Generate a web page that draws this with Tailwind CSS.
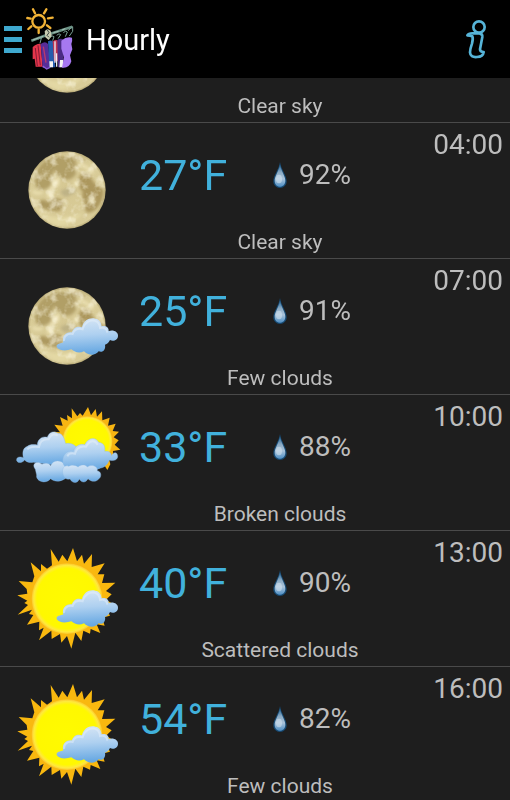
<!DOCTYPE html>
<html lang="en">
<head>
  <meta charset="UTF-8" />
  <meta name="viewport" content="width=device-width, initial-scale=1.0"/>
  <title>Hourly</title>
  <script src="https://cdn.jsdelivr.net/npm/@tailwindcss/browser@4"></script>
</head>
<body class="h-screen overflow-hidden flex flex-col bg-[#1e1e1e] text-[#bdbdbd] font-[Roboto,sans-serif]">

  <!-- Shared weather drawings -->
  <svg class="absolute w-0 h-0" aria-hidden="true">
    <defs>
      <radialGradient id="moonFill" cx="0.5" cy="0.5" r="0.5">
        <stop offset="0" stop-color="#d6c893"/>
        <stop offset="0.94" stop-color="#d9cc98"/>
        <stop offset="1" stop-color="#b3a572"/>
      </radialGradient>
      <radialGradient id="sunFill" cx="0.5" cy="0.5" r="0.5">
        <stop offset="0" stop-color="#fffb00"/>
        <stop offset="0.85" stop-color="#fff800"/>
        <stop offset="0.94" stop-color="#ffe93c"/>
        <stop offset="1" stop-color="#fcc52c"/>
      </radialGradient>
      <linearGradient id="cloudFill" x1="0" y1="0" x2="0.1" y2="1">
        <stop offset="0" stop-color="#d9e7f5"/>
        <stop offset="0.5" stop-color="#aed0f0"/>
        <stop offset="1" stop-color="#67a8e2"/>
      </linearGradient>
      <linearGradient id="dropFill" x1="0" y1="0" x2="0" y2="1">
        <stop offset="0" stop-color="#1c5f92"/>
        <stop offset="0.35" stop-color="#8aa9c2"/>
        <stop offset="0.65" stop-color="#a9c3da"/>
        <stop offset="1" stop-color="#4f8fc4"/>
      </linearGradient>
      <filter id="soft" x="-20%" y="-20%" width="140%" height="140%"><feGaussianBlur stdDeviation="4"/></filter>
      <filter id="craters" x="0" y="0" width="100%" height="100%">
        <feTurbulence type="fractalNoise" baseFrequency="0.035" numOctaves="3" seed="7"/>
        <feColorMatrix values="0 0 0 0 0.95  0 0 0 0 0.91  0 0 0 0 0.73  3.5 0 0 0 -1.6"/>
        <feComposite in2="SourceGraphic" operator="in"/>
      </filter>
      <clipPath id="moonClip"><circle cx="201" cy="201" r="115"/></clipPath>

      <symbol id="moon" viewBox="0 0 390 405">
        <circle cx="201" cy="201" r="116" fill="url(#moonFill)"/>
        <g clip-path="url(#moonClip)">
          <g filter="url(#soft)">
            <path d="M122 124Q150 94 196 100Q240 90 262 116Q240 106 222 112Q242 130 228 152Q214 176 188 168Q168 160 166 140Q150 160 156 182Q138 208 112 196Q92 166 122 124Z" fill="#a8935a" opacity=".8"/>
            <path d="M240 156Q262 142 274 164Q282 184 300 192Q318 198 306 232Q290 268 262 270Q250 258 256 240Q242 226 248 206Q226 192 240 156Z" fill="#a48e54" opacity=".85"/>
            <path d="M118 236Q128 222 144 238Q160 218 186 230Q194 252 176 266Q146 262 130 256Q114 254 118 236Z" fill="#a58f55" opacity=".85"/>
            <path d="M180 206Q196 190 226 198Q232 212 212 214Q196 232 180 206Z" fill="#9b9272" opacity=".4"/>
            <path d="M128 206Q112 216 98 204M148 204Q170 186 178 160M238 122Q262 132 280 150M226 128L232 146" fill="none" stroke="#efe5b8" stroke-width="9" opacity=".8"/>
            <circle cx="166" cy="180" r="11" fill="#f2e8bf"/>
            <circle cx="150" cy="216" r="9" fill="#efe5b8"/>
            <circle cx="230" cy="182" r="8" fill="#efe5b8"/>
            <circle cx="276" cy="232" r="9" fill="#ddcf9a"/>
            <path d="M110 260Q160 300 250 270Q200 325 150 300Z" fill="#e3d8a4"/>
          </g>
          <circle cx="201" cy="201" r="116" filter="url(#craters)" opacity=".55"/>
        </g>
      </symbol>

      <symbol id="cloud" viewBox="0 0 390 405">
        <path d="M170 264C168 254 182 254 190 250C184 232 200 216 216 220C220 204 236 200 246 205C250 184 270 174 286 179C298 180 304 192 305 202C318 198 327 206 326 216C340 211 354 218 354 230C354 243 340 248 330 243C327 250 322 255 315 257C318 272 308 282 296 277C286 291 264 290 252 277C238 284 224 280 214 271C198 276 176 276 170 264Z" fill="url(#cloudFill)"/>
        <path d="M192 246C190 232 202 222 218 225C222 210 236 207 248 211C254 190 270 182 284 185C294 187 299 196 300 207C314 204 321 210 322 221" fill="none" stroke="#e6f0fa" stroke-width="6" opacity=".5"/>
      </symbol>

      <symbol id="sun" viewBox="0 0 390 405">
        <path d="M219 51L231 91L246 71L252 98L276 69L275 108L314 97L293 130L313 130L306 156L346 155L318 180L335 190L318 206L344 222L320 234L330 254L306 260L314 284L290 280L301 306L272 294L270 308L250 299L244 330L226 305L214 353L201 315L184 335L180 309L155 324L154 299L117 328L131 290L117 298L118 272L81 281L100 252L87 249L96 236L53 251L84 222L73 216L82 209L52 193L82 188L80 174L56 150L97 154L103 136L92 94L123 121L123 99L141 113L156 103L152 54L176 92L187 71L202 91Z" fill="#f9b80f"/>
        <circle cx="201" cy="203" r="106" fill="url(#sunFill)"/>
      </symbol>

      <symbol id="brokenClouds" viewBox="0 0 390 405">
        <path d="M264 36L273 61L287 42L291 65L306 49L307 76L329 68L324 92L347 86L338 108L357 110L341 127L356 136L344 149L361 164L339 168L340 190L328 195L331 208L322 225L310 206L220 206L176 130L161 110L180 112L163 89L188 92L180 66L203 77L201 60L216 70L215 40L232 64L240 54L248 62Z" fill="#f7b512"/>
        <circle cx="262" cy="139" r="75" fill="url(#sunFill)"/>
        <g fill="url(#cloudFill)" stroke="#8dbbe6" stroke-opacity=".6" stroke-width="2">
          <path d="M50 197C48 186 60 184 70 188C68 176 66 160 82 154C88 148 102 148 112 150C112 132 128 122 142 127C148 108 164 108 174 115C190 116 192 132 197 146C214 142 228 152 232 162L222 200L180 212L100 202C90 204 80 202 74 195C64 206 54 204 50 197Z"/>
          <path d="M106 223C92 204 114 196 126 208C136 202 148 204 152 212C160 192 184 196 192 206C210 212 210 248 190 254C174 262 160 258 152 251C136 270 106 258 110 240Z"/>
          <path d="M190 208C184 182 200 164 220 170C226 150 242 146 254 149C266 126 288 126 296 142C314 144 316 158 314 169C328 168 334 174 334 182C344 166 354 174 353 186C350 198 336 198 328 195C322 210 312 218 302 219C280 230 220 230 198 220Z"/>
          <path d="M190 240C182 222 194 208 206 214C214 208 228 210 234 216C244 208 256 208 262 216C276 206 294 214 292 228C304 228 306 246 296 252C286 264 270 258 264 251C256 266 244 262 238 252C232 268 216 264 210 252C200 254 194 250 190 240Z"/>
        </g>
        <path d="M82 163C92 153 104 155 117 156C120 138 132 131 146 133C154 116 164 116 173 122M202 184C206 174 214 173 225 176C230 158 244 153 258 155C270 134 284 134 293 149" fill="none" stroke="#e6f0fa" stroke-width="6" opacity=".5"/>
      </symbol>

      <symbol id="drop" viewBox="430 105 40 78">
        <path d="M450 105C454 130 470 144 470 163C470 175 461 183 450 183C439 183 430 175 430 163C430 144 446 130 450 105Z" fill="#174a73"/>
        <path d="M450 112C454 134 466 148 466 161C466 172 459 179 450 179C441 179 434 172 434 161C434 148 446 134 450 112Z" fill="url(#dropFill)"/>
        <ellipse cx="447" cy="156" rx="9" ry="13" fill="#cfdfed" opacity=".6"/>
      </symbol>
    </defs>
  </svg>

  <!-- Header -->
  <header class="relative z-10 shrink-0 h-[78px] bg-black text-white flex items-center justify-between pl-1 pr-6">
    <div class="flex items-center">
      <button type="button" aria-label="Menu" class="flex items-center gap-1">
        <span class="flex flex-col gap-[6px] w-[18px]">
          <span class="h-[5px] bg-[#3fa9cf]"></span>
          <span class="h-[5px] bg-[#3fa9cf]"></span>
          <span class="h-[5px] bg-[#3fa9cf]"></span>
        </span>
        <svg class="w-12 h-[62px]" viewBox="78 24 144 186" aria-hidden="true">
          <g fill="none" stroke="#f2b336" stroke-width="7" stroke-linecap="round">
            <circle cx="116" cy="64" r="19"/>
            <path d="M99 28L105 40M139 28L132 40M82 54L92 56M144 55L158 53M85 87L94 79M141 76L151 84M116 88V99"/>
          </g>
          <path d="M94 122L140 105L217 80" fill="none" stroke="#6b9184" stroke-width="8"/>
          <path d="M98 120L130 109M160 98L176 94M186 90L196 86" fill="none" stroke="#a8c4b8" stroke-width="3"/>
          <path d="M114 118q4-6 10-4l-4 16M150 112q6-8 12-2l-4 12M170 106q8-8 12-2l-8 12M190 98q8-8 12-2l-6 14M204 92l14-12v14l-10 14" fill="none" stroke="#7aa095" stroke-width="3"/>
          <path d="M134 94Q142 82 152 92L155 108L146 120L136 112Z" fill="#c7cbb0"/>
          <path d="M142 90l5 8-6 8 6 6" fill="none" stroke="#38433f" stroke-width="3"/>
          <path d="M98 142Q108 130 122 131L128 200L107 200L104 176L98 178Z" fill="#e5364c"/>
          <path d="M106 144L112 198M114 136L121 196" stroke="#861b35" stroke-width="3"/>
          <path d="M122 132Q136 122 144 132L152 204H128Z" fill="#572d99"/>
          <path d="M130 140L138 188" stroke="#b83a6d" stroke-width="4"/>
          <path d="M144 124Q156 118 162 128L166 202H148Z" fill="#245cad"/>
          <path d="M148 184H159V202H149Z" fill="#f3f3f3"/>
          <path d="M158 124Q168 114 176 124L180 184H162Z" fill="#bd3150"/>
          <path d="M165 124V188M170 160V200" stroke="#ececf4" stroke-width="4"/>
          <path d="M172 120Q182 112 192 120L190 202H174Z" fill="#4b2b83"/>
          <path d="M180 180H190V202H178Z" fill="#f3f3f3"/>
          <path d="M184 122Q200 108 216 113Q218 124 214 132L217 148L210 166L214 184Q208 206 186 203L192 172L184 146Z" fill="#a678f0"/>
          <path d="M128 198L140 207L150 202" fill="none" stroke="#8a5fd6" stroke-width="4"/>
        </svg>
      </button>
      <h1 class="pl-3 pt-[2px] text-[29px] leading-9">Hourly</h1>
    </div>
    <button type="button" aria-label="Information">
      <svg class="w-[21px] h-[39px]" viewBox="75 54 63 117" fill="none" stroke="#56b4d8" stroke-width="8" stroke-linejoin="round" aria-hidden="true">
        <circle cx="117" cy="75" r="17"/>
        <path d="M82 100Q86 93 100 94H118Q128 95 127 105L120 142Q120 150 131 150Q129 165 111 165Q91 167 90 151Q90 142 96 125Q100 110 97 103Q90 100 82 100Z"/>
      </svg>
    </button>
  </header>

  <!-- Forecast list, scrolled part way through its first entry -->
  <main class="grow min-h-0">
    <ul id="forecast" class="-mt-[91px]"></ul>
  </main>

  <script>
    // the first entry is the one under the header: only its sky text shows
    const forecast = [
      { sky: 'Clear sky', icons: ['moon'] },
      { time: '04:00', temp: 27, humidity: 92, sky: 'Clear sky', icons: ['moon'] },
      { time: '07:00', temp: 25, humidity: 91, sky: 'Few clouds', icons: ['moon', 'cloud'] },
      { time: '10:00', temp: 33, humidity: 88, sky: 'Broken clouds', icons: ['brokenClouds'] },
      { time: '13:00', temp: 40, humidity: 90, sky: 'Scattered clouds', icons: ['sun', 'cloud'] },
      { time: '16:00', temp: 54, humidity: 82, sky: 'Few clouds', icons: ['sun', 'cloud'] }
    ];

    document.getElementById('forecast').innerHTML = forecast.map(f => `
      <li class="grid grid-cols-[139px_1fr_89px] border-b border-[#4a4a4a]">
        <svg class="w-[130px] h-[135px]" viewBox="0 0 390 405" aria-hidden="true">
          ${f.icons.map(i => `<use href="#${i}" width="390" height="405"/>`).join('')}
        </svg>
        <div class="pt-[26px] pb-[3px]">
          <div class="flex items-center h-[52px]">
            ${f.time ? `
            <span class="w-[134px] text-[43px] leading-[52px] text-[#41b1dc]">${f.temp}°F</span>
            <svg class="w-[14px] h-[26px] mr-3" aria-hidden="true"><use href="#drop"/></svg>
            <span class="text-[28px] leading-8">${f.humidity}%</span>` : ''}
          </div>
          <p class="mt-7 text-center text-[21px] leading-[26px]">${f.sky}</p>
        </div>
        ${f.time ? `<time class="pt-[6px] pr-[7px] text-right text-[28px] leading-8">${f.time}</time>` : ''}
      </li>
    `).join('');
  </script>
</body>
</html>
